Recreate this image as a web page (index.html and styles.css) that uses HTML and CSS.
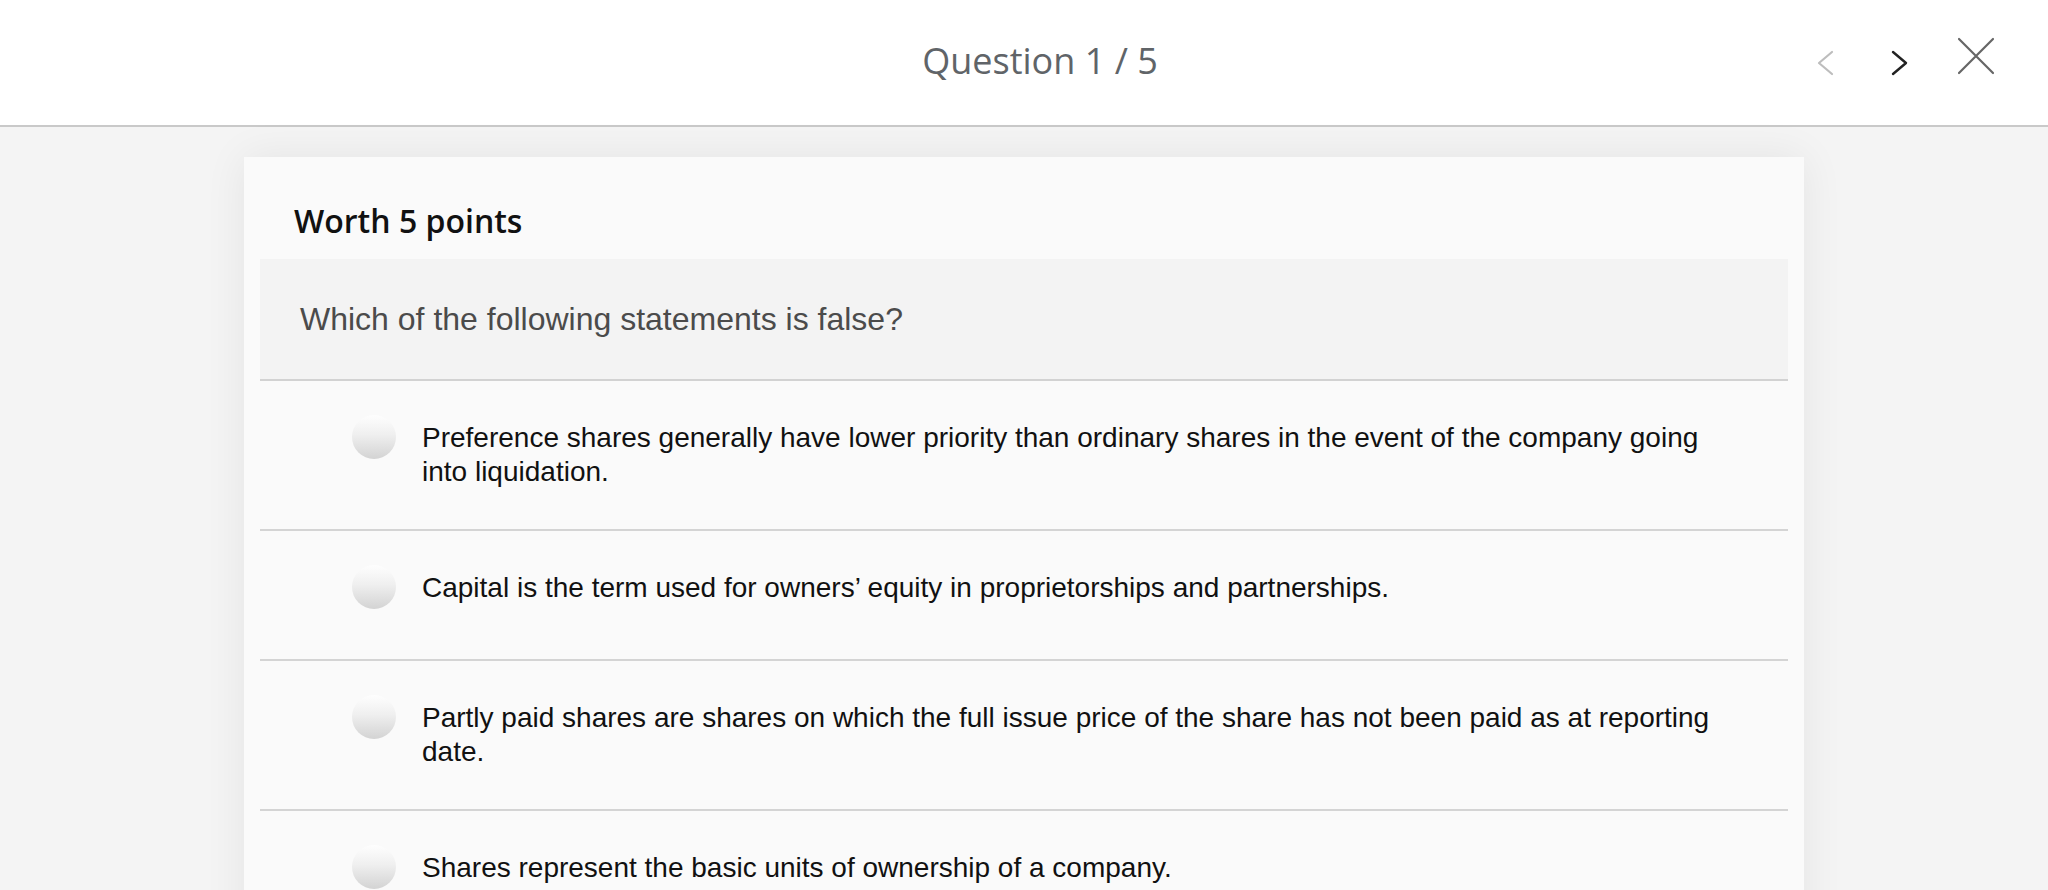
FILE: index.html
```html
<!DOCTYPE html>
<html lang="en">
<head>
<meta charset="utf-8">
<title>Question 1 / 5</title>
<link rel="stylesheet" href="styles.css">
</head>
<body>
<header class="topbar">
  <div class="topbar-left"></div>
  <h1 class="topbar-title">Question 1 / 5</h1>
  <nav class="topbar-nav">
    <button class="icon-btn chevron prev" aria-label="Previous question">
      <svg width="20" height="28" viewBox="0 0 20 28"><path d="M16 3 L3 14 L16 25" fill="none" stroke="#bdbdbd" stroke-width="2.2" stroke-linecap="round" stroke-linejoin="round"/></svg>
    </button>
    <button class="icon-btn chevron next" aria-label="Next question">
      <svg width="20" height="28" viewBox="0 0 20 28"><path d="M4 3 L17 14 L4 25" fill="none" stroke="#222" stroke-width="2.4" stroke-linecap="round" stroke-linejoin="round"/></svg>
    </button>
    <button class="icon-btn close" aria-label="Close">
      <svg width="40" height="40" viewBox="0 0 40 40"><path d="M3 3 L37 37 M37 3 L3 37" fill="none" stroke="#666" stroke-width="2.2" stroke-linecap="round"/></svg>
    </button>
  </nav>
</header>

<main class="page">
  <section class="card">
    <h2 class="points">Worth 5 points</h2>
    <div class="question">Which of the following statements is false?</div>
    <ul class="options">
      <li class="option">
        <span class="radio"></span>
        <span class="option-text">Preference shares generally have lower priority than ordinary shares in the event of the company going into liquidation.</span>
      </li>
      <li class="option">
        <span class="radio"></span>
        <span class="option-text">Capital is the term used for owners’ equity in proprietorships and partnerships.</span>
      </li>
      <li class="option">
        <span class="radio"></span>
        <span class="option-text">Partly paid shares are shares on which the full issue price of the share has not been paid as at reporting date.</span>
      </li>
      <li class="option">
        <span class="radio"></span>
        <span class="option-text">Shares represent the basic units of ownership of a company.</span>
      </li>
    </ul>
  </section>
</main>
</body>
</html>
```

FILE: styles.css
```css
* {
  box-sizing: border-box;
}

html, body {
  margin: 0;
  padding: 0;
  height: 100%;
}

body {
  background: #f4f4f4;
  font-family: "Liberation Sans", Arial, sans-serif;
  overflow: hidden;
}

.topbar {
  height: 127px;
  background: #ffffff;
  border-bottom: 2px solid #c9c9c9;
  display: grid;
  grid-template-columns: 1fr auto 1fr;
  align-items: start;
}

.topbar-title {
  margin: 0;
  padding-top: 36px;
  padding-left: 32px;
  font-family: "Open Sans", sans-serif;
  font-weight: 400;
  font-size: 36px;
  line-height: 49px;
  color: #606468;
  white-space: nowrap;
}

.topbar-nav {
  display: flex;
  justify-content: flex-end;
  align-items: flex-start;
  padding-top: 36px;
  padding-right: 52px;
}

.icon-btn {
  border: 0;
  background: none;
  padding: 0;
  margin: 0;
  display: block;
  cursor: pointer;
}

.icon-btn svg {
  display: block;
}

.chevron {
  margin-top: 13px;
}

.chevron.next {
  margin-left: 53px;
}

.close {
  margin-left: 47px;
}

.page {
  padding-top: 30px;
}

.card {
  width: 1560px;
  margin: 0 auto;
  background: #fafafa;
  box-shadow: 0 0 40px rgba(0, 0, 0, 0.07);
  padding: 44px 16px 0;
}

.points {
  margin: 0 0 18px;
  padding-left: 34px;
  font-family: "Open Sans", sans-serif;
  font-weight: 600;
  font-size: 32px;
  line-height: 40px;
  color: #111111;
}

.question {
  background: #f3f3f3;
  border-bottom: 2px solid #d2d2d2;
  padding: 42px 40px 41px;
  font-size: 32px;
  line-height: 37px;
  color: #4b4b4b;
}

.options {
  list-style: none;
  margin: 0;
  padding: 0;
}

.option {
  display: flex;
  align-items: flex-start;
  padding: 34px 55px 0 92px;
  border-bottom: 2px solid #d4d4d4;
}

.radio {
  flex: none;
  width: 44px;
  height: 44px;
  margin-bottom: 50px;
  border-radius: 50%;
  background: linear-gradient(180deg, #fefefe 0%, #efefef 45%, #d3d3d3 100%);
}

.option-text {
  flex: 1;
  margin-left: 26px;
  padding: 6px 0 40px;
  font-size: 28px;
  line-height: 34px;
  color: #111111;
}
```
